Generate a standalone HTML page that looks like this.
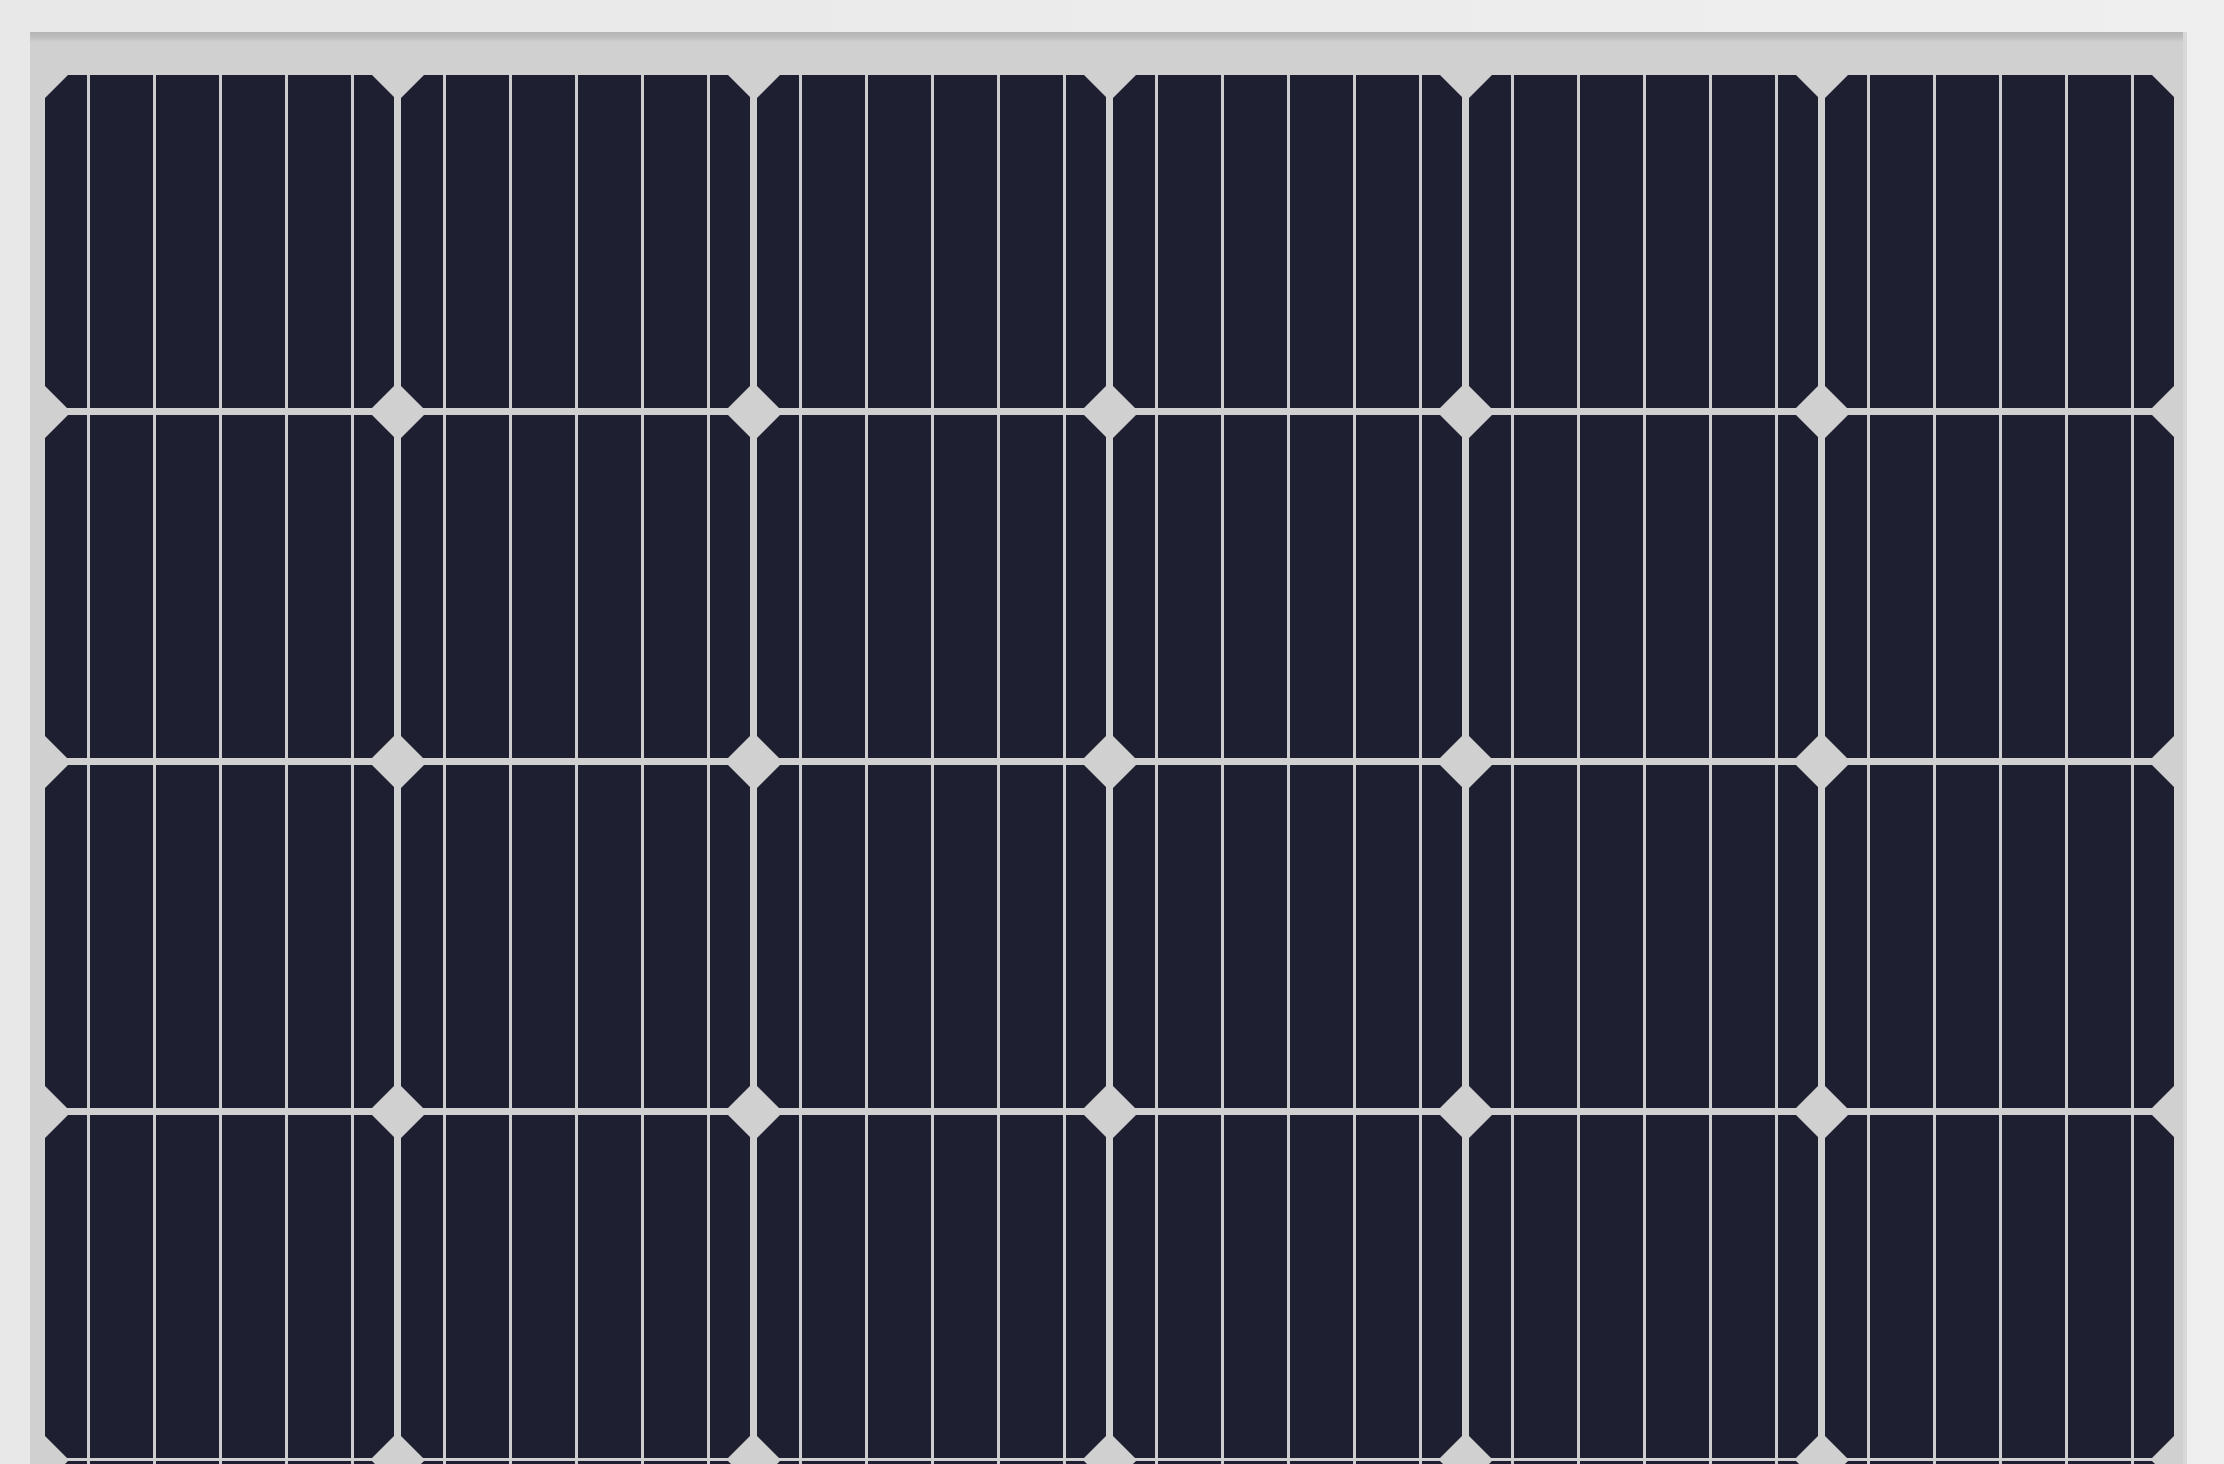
<!DOCTYPE html>
<html><head><meta charset="utf-8"><style>
html,body{margin:0;padding:0;width:2224px;height:1464px;overflow:hidden;background:#e9e9e9;}
svg{display:block}
</style></head><body>
<svg width="2224" height="1464" viewBox="0 0 2224 1464" xmlns="http://www.w3.org/2000/svg">
<defs>
<linearGradient id="bg" x1="0" y1="0" x2="1" y2="0"><stop offset="0" stop-color="#e8e8e8"/><stop offset="1" stop-color="#efefef"/></linearGradient>
<linearGradient id="sh" x1="0" y1="0" x2="0" y2="1"><stop offset="0" stop-color="#b4b4b4"/><stop offset="0.5" stop-color="#bdbdbd"/><stop offset="1" stop-color="#cfcfcf"/></linearGradient>
<g id="cA">
<polygon points="23,0 327,0 349,22 349,311 327,333 22,333 0,311 0,23" fill="#1e1f30"/>
<rect x="42" y="0" width="3" height="333" fill="#cdcdd0"/>
<rect x="108" y="0" width="3" height="333" fill="#cdcdd0"/>
<rect x="174" y="0" width="3" height="333" fill="#cdcdd0"/>
<rect x="240" y="0" width="3" height="333" fill="#cdcdd0"/>
<rect x="306" y="0" width="3" height="333" fill="#cdcdd0"/>
</g>
<g id="cB">
<polygon points="23,0 327,0 349,22 349,321 327,343 22,343 0,321 0,23" fill="#1e1f30"/>
<rect x="42" y="0" width="3" height="343" fill="#cdcdd0"/>
<rect x="108" y="0" width="3" height="343" fill="#cdcdd0"/>
<rect x="174" y="0" width="3" height="343" fill="#cdcdd0"/>
<rect x="240" y="0" width="3" height="343" fill="#cdcdd0"/>
<rect x="306" y="0" width="3" height="343" fill="#cdcdd0"/>
</g>
</defs>
<rect width="2224" height="1464" fill="url(#bg)"/>
<rect x="30" y="32" width="2157" height="1432" fill="#d0d0d0"/>
<rect x="30" y="32" width="2157" height="10" fill="url(#sh)"/>
<rect x="2183" y="32" width="4" height="1432" fill="#d8d8d8"/>
<g>
<use href="#cA" x="45" y="75"/><use href="#cA" x="401" y="75"/><use href="#cA" x="757" y="75"/><use href="#cA" x="1113" y="75"/><use href="#cA" x="1469" y="75"/><use href="#cA" x="1825" y="75"/>
<use href="#cB" x="45" y="415"/><use href="#cB" x="401" y="415"/><use href="#cB" x="757" y="415"/><use href="#cB" x="1113" y="415"/><use href="#cB" x="1469" y="415"/><use href="#cB" x="1825" y="415"/>
<use href="#cB" x="45" y="765"/><use href="#cB" x="401" y="765"/><use href="#cB" x="757" y="765"/><use href="#cB" x="1113" y="765"/><use href="#cB" x="1469" y="765"/><use href="#cB" x="1825" y="765"/>
<use href="#cB" x="45" y="1115"/><use href="#cB" x="401" y="1115"/><use href="#cB" x="757" y="1115"/><use href="#cB" x="1113" y="1115"/><use href="#cB" x="1469" y="1115"/><use href="#cB" x="1825" y="1115"/>
<use href="#cB" x="45" y="1461"/><use href="#cB" x="401" y="1461"/><use href="#cB" x="757" y="1461"/><use href="#cB" x="1113" y="1461"/><use href="#cB" x="1469" y="1461"/><use href="#cB" x="1825" y="1461"/>
</g>
</svg>
</body></html>
